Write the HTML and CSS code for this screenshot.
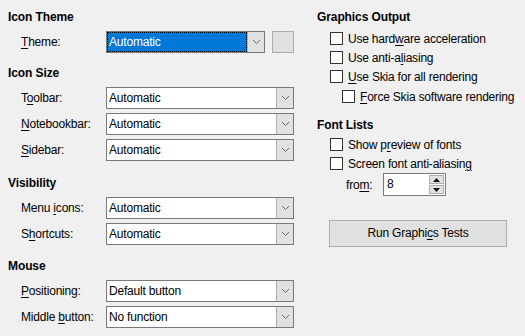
FILE: index.html
```html
<!DOCTYPE html>
<html lang="en">
<head>
  <meta charset="UTF-8">
  <title>View Options</title>
  <link rel="stylesheet" href="styles.css">
</head>
<body>
  <div class="dialog">
    <!-- Left column -->
    <div class="col col-left">
      <section class="group group-first">
        <h2>Icon Theme</h2>
        <div class="row">
          <label><u>T</u>heme:</label>
          <div class="combo combo-short focused">
            <span class="value">Automatic</span>
            <span class="drop"><svg width="9" height="6" viewBox="0 0 9 6"><path d="M1 1L4.5 4.5L8 1" fill="none" stroke="#555" stroke-width="1"/></svg></span>
          </div>
          <div class="square"></div>
        </div>
      </section>

      <section class="group group-size">
        <h2>Icon Size</h2>
        <div class="row">
          <label>T<u>o</u>olbar:</label>
          <div class="combo">
            <span class="value">Automatic</span>
            <span class="drop"><svg width="9" height="6" viewBox="0 0 9 6"><path d="M1 1L4.5 4.5L8 1" fill="none" stroke="#555" stroke-width="1"/></svg></span>
          </div>
        </div>
        <div class="row">
          <label><u>N</u>otebookbar:</label>
          <div class="combo">
            <span class="value">Automatic</span>
            <span class="drop"><svg width="9" height="6" viewBox="0 0 9 6"><path d="M1 1L4.5 4.5L8 1" fill="none" stroke="#555" stroke-width="1"/></svg></span>
          </div>
        </div>
        <div class="row">
          <label><u>S</u>idebar:</label>
          <div class="combo">
            <span class="value">Automatic</span>
            <span class="drop"><svg width="9" height="6" viewBox="0 0 9 6"><path d="M1 1L4.5 4.5L8 1" fill="none" stroke="#555" stroke-width="1"/></svg></span>
          </div>
        </div>
      </section>

      <section class="group group-visibility">
        <h2>Visibility</h2>
        <div class="row">
          <label>Menu <u>i</u>cons:</label>
          <div class="combo">
            <span class="value">Automatic</span>
            <span class="drop"><svg width="9" height="6" viewBox="0 0 9 6"><path d="M1 1L4.5 4.5L8 1" fill="none" stroke="#555" stroke-width="1"/></svg></span>
          </div>
        </div>
        <div class="row">
          <label>S<u>h</u>ortcuts:</label>
          <div class="combo">
            <span class="value">Automatic</span>
            <span class="drop"><svg width="9" height="6" viewBox="0 0 9 6"><path d="M1 1L4.5 4.5L8 1" fill="none" stroke="#555" stroke-width="1"/></svg></span>
          </div>
        </div>
      </section>

      <section class="group group-mouse">
        <h2>Mouse</h2>
        <div class="row">
          <label><u>P</u>ositioning:</label>
          <div class="combo">
            <span class="value">Default button</span>
            <span class="drop"><svg width="9" height="6" viewBox="0 0 9 6"><path d="M1 1L4.5 4.5L8 1" fill="none" stroke="#555" stroke-width="1"/></svg></span>
          </div>
        </div>
        <div class="row">
          <label>Middle <u>b</u>utton:</label>
          <div class="combo">
            <span class="value">No function</span>
            <span class="drop"><svg width="9" height="6" viewBox="0 0 9 6"><path d="M1 1L4.5 4.5L8 1" fill="none" stroke="#555" stroke-width="1"/></svg></span>
          </div>
        </div>
      </section>
    </div>

    <!-- Right column -->
    <div class="col col-right">
      <section class="group group-first">
        <h2>Graphics Output</h2>
        <div class="checks">
          <div class="check"><span class="box"></span>Use hard<u>w</u>are acceleration</div>
          <div class="check"><span class="box"></span>Use anti-a<u>l</u>iasing</div>
          <div class="check"><span class="box"></span><u>U</u>se Skia for all rendering</div>
          <div class="check sub"><span class="box"></span><u>F</u>orce Skia software rendering</div>
        </div>
      </section>

      <section class="group group-fonts">
        <h2>Font Lists</h2>
        <div class="checks">
          <div class="check"><span class="box"></span>Show p<u>r</u>eview of fonts</div>
          <div class="check"><span class="box"></span>Screen font anti-aliasin<u>g</u></div>
        </div>
        <div class="spin-row">
          <label>fro<u>m</u>:</label>
          <div class="spin">
            <span class="value">8</span>
            <span class="spin-buttons">
              <span class="spin-btn"><svg width="7" height="4" viewBox="0 0 7 4"><path d="M0 4L3.5 0L7 4Z" fill="#111"/></svg></span>
              <span class="spin-btn"><svg width="7" height="4" viewBox="0 0 7 4"><path d="M0 0L3.5 4L7 0Z" fill="#111"/></svg></span>
            </span>
          </div>
        </div>
      </section>

      <div class="push">Run Graphi<u>c</u>s Tests</div>
    </div>
  </div>
</body>
</html>
```

FILE: styles.css
```css
/* Base */
* {
  margin: 0;
  padding: 0;
  box-sizing: border-box;
}

body {
  font-family: "Liberation Sans", Arial, sans-serif;
  font-size: 12px;
  letter-spacing: -0.2px;
  color: #000;
  background-color: #f0f0f0;
}

u {
  text-decoration: underline;
  text-underline-offset: 2px;
}

.dialog {
  display: flex;
  height: 336px;
}

.col-left {
  width: 294px;
  flex-shrink: 0;
  padding-left: 8px;
}

.col-right {
  flex: 1;
  margin-left: 23px;
  white-space: nowrap;
}

/* Groups */
h2 {
  font-size: 12px;
  font-weight: bold;
  letter-spacing: -0.1px;
  height: 16px;
  line-height: 16px;
  margin-bottom: 6px;
}

.group-first {
  padding-top: 9px;
}

.group-size {
  margin-top: 12px;
}

.group-visibility {
  margin-top: 14px;
}

.group-mouse {
  margin-top: 13px;
}

/* Label + combo rows */
.row {
  display: flex;
  align-items: center;
  height: 22px;
  padding-left: 13px;
  margin-bottom: 4px;
}

.row label {
  width: 85px;
  flex-shrink: 0;
}

.combo {
  display: flex;
  align-items: stretch;
  width: 188px;
  height: 22px;
  border: 1px solid #7a7a7a;
  background-color: #fff;
}

.combo-short {
  width: 159px;
}

.combo .value {
  flex: 1;
  padding-left: 2px;
  line-height: 20px;
}

.combo.focused .value {
  background-color: #0078d7;
  color: #fff;
  outline: 1px dotted #000;
  outline-offset: -1px;
}

.drop {
  width: 17px;
  display: flex;
  align-items: center;
  justify-content: center;
  background-color: #e1e1e1;
  border-left: 1px solid #adadad;
}

.drop svg path {
  stroke: #6d6d6d;
}

.square {
  width: 22px;
  height: 22px;
  margin-left: 7px;
  background-color: #e1e1e1;
  border: 1px solid #adadad;
}

/* Checkboxes */
.col-right h2 {
  margin-bottom: 4px;
}

.check {
  display: flex;
  align-items: center;
  height: 19px;
  padding-left: 13px;
}

.check.sub {
  padding-left: 25px;
  margin-top: 1px;
}

.box {
  width: 13px;
  height: 13px;
  border: 1px solid #333;
  background-color: #fff;
  margin-right: 5px;
  flex-shrink: 0;
}

.group-fonts {
  margin-top: 11px;
}

.col-right .group-fonts h2 {
  margin-bottom: 2px;
}

/* Spin field */
.spin-row {
  display: flex;
  align-items: center;
  padding-left: 29px;
  height: 23px;
}

.spin-row label {
  width: 37px;
}

.spin {
  display: flex;
  width: 63px;
  height: 23px;
  border: 1px solid #7a7a7a;
  background-color: #fff;
}

.spin .value {
  flex: 1;
  padding-left: 3px;
  line-height: 21px;
}

.spin-buttons {
  display: flex;
  flex-direction: column;
  width: 16px;
  padding: 1px 1px 1px 0;
  gap: 1px;
}

.spin-btn {
  flex: 1;
  display: flex;
  align-items: center;
  justify-content: center;
  background-color: #e1e1e1;
  border: 1px solid #adadad;
}

/* Push button */
.push {
  margin-top: 24px;
  margin-left: 12px;
  width: 178px;
  height: 27px;
  line-height: 25px;
  text-align: center;
  background-color: #e1e1e1;
  border: 1px solid #adadad;
}
```
